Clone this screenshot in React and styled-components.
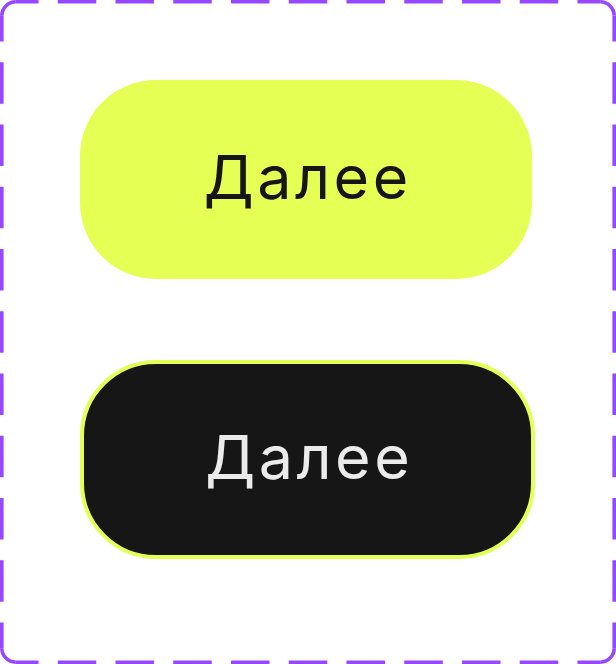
import React from "react";
import styled, { createGlobalStyle } from "styled-components";

const Global = createGlobalStyle`
  html, body { margin: 0; padding: 0; background: #ffffff; }
  body { font-family: Inter, "Noto Sans", sans-serif; }
`;

const Frame = styled.div`
  position: relative;
  width: 616px;
  height: 664px;
  box-sizing: border-box;
  padding-top: 80px;
  padding-left: 80px;
  display: flex;
  flex-direction: column;
  align-items: flex-start;
  gap: 81px;
  background: #ffffff;
`;

const Outline = styled.svg`
  position: absolute;
  inset: 0;
  pointer-events: none;
`;

const Button = styled.button`
  box-sizing: border-box;
  width: ${(p) => p.$w}px;
  height: 199px;
  border-radius: 76px;
  border: ${(p) => (p.$dark ? "4px solid #E5FF55" : "none")};
  background: ${(p) => (p.$dark ? "#161616" : "#E5FF55")};
  color: ${(p) => (p.$dark ? "#EBEBEB" : "#161616")};
  font-family: Inter, "Noto Sans", sans-serif;
  font-weight: 400;
  font-size: 61px;
  line-height: 1;
  letter-spacing: 3.5px;
  display: flex;
  align-items: center;
  justify-content: center;
  padding: 0 0 4px 3.5px;
  cursor: pointer;
`;

const W = 616;
const H = 664;
const SW = 3.6;
const o = SW / 2;
const R = 14;
const PURPLE = "#9747FF";

function DashedOutline() {
  const hDash = W / 32;
  const vDash = H / 32;
  return (
    <Outline width={W} height={H} viewBox={`0 0 ${W} ${H}`}>
      <g fill="none" stroke={PURPLE} strokeWidth={SW}>
        <line x1={0} y1={o} x2={W} y2={o} strokeDasharray={`${hDash * 2} ${hDash}`} />
        <line x1={0} y1={H - o} x2={W} y2={H - o} strokeDasharray={`${hDash * 2} ${hDash}`} />
        <line x1={o} y1={0} x2={o} y2={H} strokeDasharray={`${vDash * 2} ${vDash}`} />
        <line x1={W - o} y1={0} x2={W - o} y2={H} strokeDasharray={`${vDash * 2} ${vDash}`} />
      </g>
      <g fill="#ffffff">
        <rect x={0} y={0} width={R + o} height={R + o} />
        <rect x={W - R - o} y={0} width={R + o} height={R + o} />
        <rect x={0} y={H - R - o} width={R + o} height={R + o} />
        <rect x={W - R - o} y={H - R - o} width={R + o} height={R + o} />
      </g>
      <g fill="none" stroke={PURPLE} strokeWidth={SW}>
        <path d={`M ${o} ${R + o} A ${R} ${R} 0 0 1 ${R + o} ${o}`} />
        <path d={`M ${W - R - o} ${o} A ${R} ${R} 0 0 1 ${W - o} ${R + o}`} />
        <path d={`M ${W - o} ${H - R - o} A ${R} ${R} 0 0 1 ${W - R - o} ${H - o}`} />
        <path d={`M ${R + o} ${H - o} A ${R} ${R} 0 0 1 ${o} ${H - R - o}`} />
      </g>
    </Outline>
  );
}

export default function App() {
  return (
    <>
      <Global />
      <Frame>
        <DashedOutline />
        <Button $w={452}>Далее</Button>
        <Button $w={455} $dark>Далее</Button>
      </Frame>
    </>
  );
}
